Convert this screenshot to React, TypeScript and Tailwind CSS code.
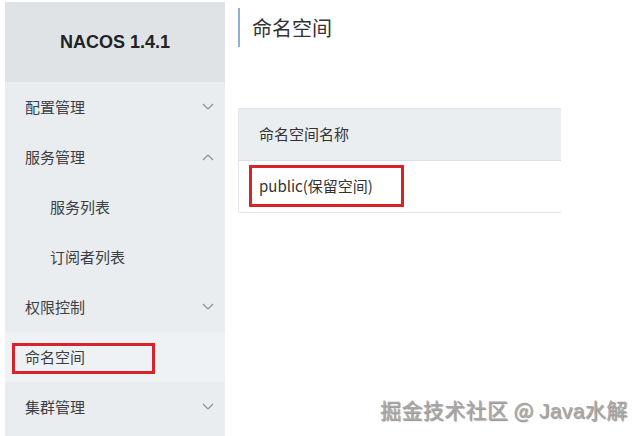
import React from 'react';

const menu = [
  { label: '配置管理', arrow: 'down' },
  { label: '服务管理', arrow: 'up' },
  { label: '服务列表', sub: true },
  { label: '订阅者列表', sub: true },
  { label: '权限控制', arrow: 'down' },
  { label: '命名空间', active: true },
  { label: '集群管理', arrow: 'down' },
];

function Chevron({ up }: { up?: boolean }) {
  return (
    <svg width="12" height="8" viewBox="0 0 12 8" className="text-[#8a8f96]">
      <path d={up ? 'M1 7 L6 2 L11 7' : 'M1 1 L6 6 L11 1'} fill="none" stroke="currentColor" strokeWidth="1.1" />
    </svg>
  );
}

export default function App() {
  return (
    <div
      className="relative w-[644px] h-[436px] overflow-hidden bg-white flex"
      style={{ fontFamily: '"Microsoft YaHei", "Noto Sans CJK SC", "Noto Sans", sans-serif' }}
    >
      {/* Sidebar */}
      <div className="ml-[5px] mt-[2px] w-[220px] flex flex-col bg-[#eaedf0]">
        <div className="h-[80px] bg-[#dfe3e6] flex items-center justify-center">
          <span className="text-[18px] font-bold text-[#202326]" style={{ fontFamily: '"Liberation Sans", Arial, sans-serif' }}>NACOS 1.4.1</span>
        </div>
        {menu.map((m, i) => (
          <div
            key={i}
            className={`relative h-[50px] flex items-center justify-between pr-[11px] text-[15px] text-[#3b3f44] ${m.sub ? 'pl-[45px]' : 'pl-[20px]'} ${m.active ? 'bg-[#eff2f5]' : ''}`}
          >
            <span>{m.label}</span>
            {m.arrow && <Chevron up={m.arrow === 'up'} />}
            {m.active && (
              <div className="absolute left-[7px] top-[11px] w-[143px] h-[31px] border-[3px] border-[#d8232a]" />
            )}
          </div>
        ))}
      </div>

      {/* Main */}
      <div className="flex-1 pl-[13px] pt-[8px]">
        <div className="h-[39px] border-l-[2px] border-[#8fb0d6] pl-[12px] flex items-center">
          <span className="text-[20px] text-[#333]">命名空间</span>
        </div>
        <div className="mt-[61px] w-[323px] border-l border-[#e6e8eb] border-t border-t-[#e0e3e6]">
          <div className="h-[52px] bg-[#ebeef1] flex items-center pl-[20px] text-[15px] text-[#333] border-b border-[#dcdfe3]">
            命名空间名称
          </div>
          <div className="relative h-[52px] flex items-center pl-[20px] text-[15px] text-[#333] border-b border-[#e3e6e9]">
            public(保留空间)
            <div className="absolute left-[10px] top-[4px] w-[155px] h-[42px] border-[3px] border-[#d8232a]" />
          </div>
        </div>
      </div>

      {/* Watermark */}
      <div
        className="absolute left-[380px] top-[394px] text-[21px] tracking-[0.4px] text-[#a8a8a8] whitespace-nowrap"
        style={{ textShadow: '1px 1px 1px rgba(0,0,0,0.45)' }}
      >
        掘金技术社区 @ <span style={{ fontFamily: '"Liberation Sans", Arial, sans-serif' }}>Java</span>水解
      </div>
    </div>
  );
}
